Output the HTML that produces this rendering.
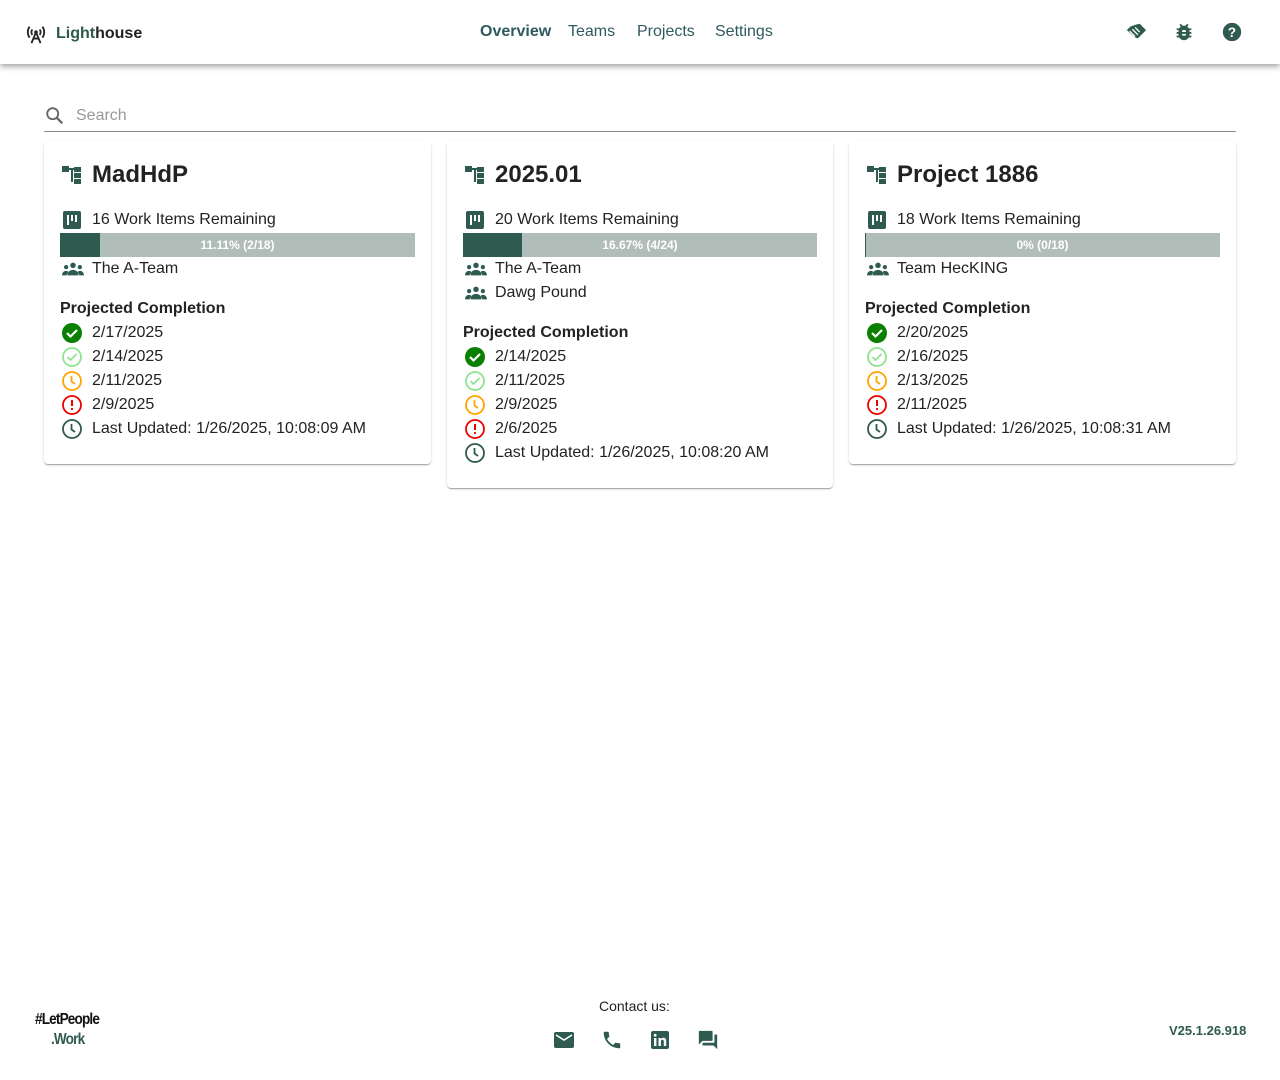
<!DOCTYPE html>
<html><head><meta charset="utf-8"><style>
*{box-sizing:border-box;margin:0;padding:0}
body{width:1280px;height:1080px;background:#fff;font-family:"Liberation Sans",Arial,sans-serif;color:#222;position:relative;overflow:hidden}
.hdr{position:absolute;left:0;top:0;width:1280px;height:64px;background:#fff;box-shadow:0 2px 4px -1px rgba(0,0,0,.2),0 4px 5px 0 rgba(0,0,0,.14),0 1px 10px 0 rgba(0,0,0,.12)}
.logo{position:absolute;left:25px;top:24px;font-size:16px;font-weight:bold;color:#222;display:flex;align-items:center;gap:9px}
.logo span.l{color:#2e5a50}
.nav{position:absolute;top:23px;left:480px;font-size:16px;color:#2e5a5f}
.nav span{position:absolute;white-space:nowrap}
.ticons svg{position:absolute;top:21px}
.search{position:absolute;left:44px;top:100px;width:1192px;height:32px;border-bottom:1px solid #8a8a8a}
.search span{position:absolute;left:32px;top:7px;font-size:16px;color:#999}
.card{position:absolute;top:141px;width:387px;background:#fff;border-radius:4px;box-shadow:0 2px 1px -1px rgba(0,0,0,.2),0 1px 1px 0 rgba(0,0,0,.14),0 1px 3px 0 rgba(0,0,0,.12);padding:18px 16px 23px}
.title{height:32px;display:flex;align-items:center;font-size:24px;font-weight:bold;color:#222;margin-bottom:17px}
.title svg{margin:0 10px 0 2px}
.row{height:24px;display:flex;align-items:center;font-size:16px;color:#222;white-space:nowrap}
.row svg{margin:0 10px 0 2px;flex:none}
.row svg.tm{margin-right:8px}
.bar{height:24px;background:#b0bdb9;position:relative;margin:1px 0 0}
.bar .f{position:absolute;left:0;top:0;bottom:0;background:#2e5a50}
.bar span{position:absolute;left:0;right:0;top:5px;text-align:center;font-size:12px;font-weight:bold;color:#fff}
.pc{font-weight:bold;margin-top:16px}
.foot{position:absolute;top:990px;width:1280px}
</style></head><body>
<div class="hdr">
 <div class="logo">
  <svg width="22" height="20" viewBox="0 0 24 22"><g fill="none" stroke="#222" stroke-width="2"><path d="M5 3a10 10 0 0 0 0 12M19 3a10 10 0 0 1 0 12M8 6a5 5 0 0 0 0 6M16 6a5 5 0 0 1 0 6"/></g><circle cx="12" cy="9" r="2" fill="#222"/><path d="M12 9l-5 12M12 9l5 12M9 16h6" stroke="#222" stroke-width="2" fill="none"/></svg>
  <div><span class="l">Light</span>house</div>
 </div>
 <div class="nav"><span style="left:0;font-weight:bold">Overview</span><span style="left:88px">Teams</span><span style="left:157px">Projects</span><span style="left:235px">Settings</span></div>
 <div class="ticons">
  <svg style="left:1125px" width="22" height="22" viewBox="0 0 24 24"><path fill="#2e5a50" d="M12 4l4-1 7 7-9 9-3-1L2 10l4-4z"/><path d="M5 11l6 6M8 9l6 6M11 7l5 5" stroke="#fff" stroke-width="1.4"/></svg>
  <svg style="left:1173px" width="22" height="22" viewBox="0 0 24 24"><path fill="#2e5a50" d="M20 8h-2.8c-.45-.78-1.07-1.450-1.82-1.96L17 4.41 15.590 3l-2.17 2.17a6 6 0 0 0-2.83 0L8.41 3 7 4.41l1.62 1.63C7.88 6.55 7.26 7.22 6.81 8H4v2h2.09c-.05.33-.09.66-.09 1v1H4v2h2v1c0 .34.04.67.09 1H4v2h2.81A6 6 0 0 0 17.2 18H20v-2h-2.09c.05-.33.09-.66.09-1v-1h2v-2h-2v-1c0-.34-.04-.67-.09-1H20zm-6 8h-4v-2h4zm0-4h-4v-2h4z"/></svg>
  <svg style="left:1221px" width="22" height="22" viewBox="0 0 24 24"><circle cx="12" cy="12" r="10" fill="#2e5a50"/><text x="12" y="17.5" text-anchor="middle" font-size="15" font-weight="bold" fill="#fff" font-family="Liberation Sans">?</text></svg>
 </div>
</div>
<div class="search">
 <svg style="position:absolute;left:0;top:5px" width="22" height="22" viewBox="0 0 24 24"><circle cx="9.5" cy="9.5" r="6" fill="none" stroke="#666" stroke-width="2"/><path d="M14 14l6 6" stroke="#666" stroke-width="2.4"/></svg>
 <span>Search</span>
</div>

<div class="card" style="left:44px">
 <div class="title"><svg width="20" height="20" viewBox="0 0 20 20" fill="#2e5a50"><rect x="0" y="1" width="7" height="6"/><rect x="7" y="3" width="6" height="2"/><rect x="9" y="3" width="2" height="14"/><rect x="12" y="2" width="7" height="5"/><rect x="12" y="8" width="7" height="5"/><rect x="12" y="14" width="7" height="5"/></svg>MadHdP</div>
 <div class="row"><svg width="20" height="20" viewBox="0 0 20 20"><rect x="1" y="1" width="18" height="18" rx="2" fill="#2e5a50"/><path d="M6 5v10M10 5v6M14 5v7" stroke="#fff" stroke-width="2"/></svg>16 Work Items Remaining</div>
 <div class="bar"><div class="f" style="width:40px"></div><span>11.11% (2/18)</span></div>
 <div class="row"><svg class="tm" width="22" height="16" viewBox="0 0 24 16" fill="#2e5a50"><circle cx="12" cy="4" r="3"/><circle cx="4.5" cy="6" r="2.3"/><circle cx="19.5" cy="6" r="2.3"/><path d="M6 15c0-4 3-6 6-6s6 2 6 6zM0 15c0-3 2-5 4-5s3 1 3 1l-2 4zM24 15c0-3-2-5-4-5s-3 1-3 1l2 4z"/></svg>The A-Team</div>
 <div class="row pc">Projected Completion</div>
 <div class="row"><svg width="20" height="20" viewBox="0 0 20 20"><circle cx="10" cy="10" r="10" fill="#0a8000"/><path d="M5 10l3.5 3.5L15 7" stroke="#fff" stroke-width="2.2" fill="none"/></svg>2/17/2025</div>
 <div class="row"><svg width="20" height="20" viewBox="0 0 20 20"><circle cx="10" cy="10" r="9" fill="none" stroke="#8fe38f" stroke-width="1.8"/><path d="M5.5 10l3 3L14.5 7" stroke="#8fe38f" stroke-width="1.8" fill="none"/></svg>2/14/2025</div>
 <div class="row"><svg width="20" height="20" viewBox="0 0 20 20"><circle cx="10" cy="10" r="9" fill="none" stroke="#ffa500" stroke-width="1.8"/><path d="M9.5 5v5.5l3.5 2.5" stroke="#ffa500" stroke-width="1.8" fill="none"/></svg>2/11/2025</div>
 <div class="row"><svg width="20" height="20" viewBox="0 0 20 20"><circle cx="10" cy="10" r="9" fill="none" stroke="#e00" stroke-width="1.8"/><path d="M10 5v6" stroke="#e00" stroke-width="2"/><circle cx="10" cy="14" r="1.1" fill="#e00"/></svg>2/9/2025</div>
 <div class="row"><svg width="20" height="20" viewBox="0 0 20 20"><circle cx="10" cy="10" r="9" fill="none" stroke="#2e5a50" stroke-width="1.8"/><path d="M9.5 5v5.5l3.5 2.5" stroke="#2e5a50" stroke-width="1.8" fill="none"/></svg>Last Updated: 1/26/2025, 10:08:09 AM</div>
</div>

<div class="card" style="left:447px;width:386px">
 <div class="title"><svg width="20" height="20" viewBox="0 0 20 20" fill="#2e5a50"><rect x="0" y="1" width="7" height="6"/><rect x="7" y="3" width="6" height="2"/><rect x="9" y="3" width="2" height="14"/><rect x="12" y="2" width="7" height="5"/><rect x="12" y="8" width="7" height="5"/><rect x="12" y="14" width="7" height="5"/></svg>2025.01</div>
 <div class="row"><svg width="20" height="20" viewBox="0 0 20 20"><rect x="1" y="1" width="18" height="18" rx="2" fill="#2e5a50"/><path d="M6 5v10M10 5v6M14 5v7" stroke="#fff" stroke-width="2"/></svg>20 Work Items Remaining</div>
 <div class="bar"><div class="f" style="width:59px"></div><span>16.67% (4/24)</span></div>
 <div class="row"><svg class="tm" width="22" height="16" viewBox="0 0 24 16" fill="#2e5a50"><circle cx="12" cy="4" r="3"/><circle cx="4.5" cy="6" r="2.3"/><circle cx="19.5" cy="6" r="2.3"/><path d="M6 15c0-4 3-6 6-6s6 2 6 6zM0 15c0-3 2-5 4-5s3 1 3 1l-2 4zM24 15c0-3-2-5-4-5s-3 1-3 1l2 4z"/></svg>The A-Team</div>
 <div class="row"><svg class="tm" width="22" height="16" viewBox="0 0 24 16" fill="#2e5a50"><circle cx="12" cy="4" r="3"/><circle cx="4.5" cy="6" r="2.3"/><circle cx="19.5" cy="6" r="2.3"/><path d="M6 15c0-4 3-6 6-6s6 2 6 6zM0 15c0-3 2-5 4-5s3 1 3 1l-2 4zM24 15c0-3-2-5-4-5s-3 1-3 1l2 4z"/></svg>Dawg Pound</div>
 <div class="row pc">Projected Completion</div>
 <div class="row"><svg width="20" height="20" viewBox="0 0 20 20"><circle cx="10" cy="10" r="10" fill="#0a8000"/><path d="M5 10l3.5 3.5L15 7" stroke="#fff" stroke-width="2.2" fill="none"/></svg>2/14/2025</div>
 <div class="row"><svg width="20" height="20" viewBox="0 0 20 20"><circle cx="10" cy="10" r="9" fill="none" stroke="#8fe38f" stroke-width="1.8"/><path d="M5.5 10l3 3L14.5 7" stroke="#8fe38f" stroke-width="1.8" fill="none"/></svg>2/11/2025</div>
 <div class="row"><svg width="20" height="20" viewBox="0 0 20 20"><circle cx="10" cy="10" r="9" fill="none" stroke="#ffa500" stroke-width="1.8"/><path d="M9.5 5v5.5l3.5 2.5" stroke="#ffa500" stroke-width="1.8" fill="none"/></svg>2/9/2025</div>
 <div class="row"><svg width="20" height="20" viewBox="0 0 20 20"><circle cx="10" cy="10" r="9" fill="none" stroke="#e00" stroke-width="1.8"/><path d="M10 5v6" stroke="#e00" stroke-width="2"/><circle cx="10" cy="14" r="1.1" fill="#e00"/></svg>2/6/2025</div>
 <div class="row"><svg width="20" height="20" viewBox="0 0 20 20"><circle cx="10" cy="10" r="9" fill="none" stroke="#2e5a50" stroke-width="1.8"/><path d="M9.5 5v5.5l3.5 2.5" stroke="#2e5a50" stroke-width="1.8" fill="none"/></svg>Last Updated: 1/26/2025, 10:08:20 AM</div>
</div>

<div class="card" style="left:849px">
 <div class="title"><svg width="20" height="20" viewBox="0 0 20 20" fill="#2e5a50"><rect x="0" y="1" width="7" height="6"/><rect x="7" y="3" width="6" height="2"/><rect x="9" y="3" width="2" height="14"/><rect x="12" y="2" width="7" height="5"/><rect x="12" y="8" width="7" height="5"/><rect x="12" y="14" width="7" height="5"/></svg>Project 1886</div>
 <div class="row"><svg width="20" height="20" viewBox="0 0 20 20"><rect x="1" y="1" width="18" height="18" rx="2" fill="#2e5a50"/><path d="M6 5v10M10 5v6M14 5v7" stroke="#fff" stroke-width="2"/></svg>18 Work Items Remaining</div>
 <div class="bar"><div class="f" style="width:1px"></div><span>0% (0/18)</span></div>
 <div class="row"><svg class="tm" width="22" height="16" viewBox="0 0 24 16" fill="#2e5a50"><circle cx="12" cy="4" r="3"/><circle cx="4.5" cy="6" r="2.3"/><circle cx="19.5" cy="6" r="2.3"/><path d="M6 15c0-4 3-6 6-6s6 2 6 6zM0 15c0-3 2-5 4-5s3 1 3 1l-2 4zM24 15c0-3-2-5-4-5s-3 1-3 1l2 4z"/></svg>Team HecKING</div>
 <div class="row pc">Projected Completion</div>
 <div class="row"><svg width="20" height="20" viewBox="0 0 20 20"><circle cx="10" cy="10" r="10" fill="#0a8000"/><path d="M5 10l3.5 3.5L15 7" stroke="#fff" stroke-width="2.2" fill="none"/></svg>2/20/2025</div>
 <div class="row"><svg width="20" height="20" viewBox="0 0 20 20"><circle cx="10" cy="10" r="9" fill="none" stroke="#8fe38f" stroke-width="1.8"/><path d="M5.5 10l3 3L14.5 7" stroke="#8fe38f" stroke-width="1.8" fill="none"/></svg>2/16/2025</div>
 <div class="row"><svg width="20" height="20" viewBox="0 0 20 20"><circle cx="10" cy="10" r="9" fill="none" stroke="#ffa500" stroke-width="1.8"/><path d="M9.5 5v5.5l3.5 2.5" stroke="#ffa500" stroke-width="1.8" fill="none"/></svg>2/13/2025</div>
 <div class="row"><svg width="20" height="20" viewBox="0 0 20 20"><circle cx="10" cy="10" r="9" fill="none" stroke="#e00" stroke-width="1.8"/><path d="M10 5v6" stroke="#e00" stroke-width="2"/><circle cx="10" cy="14" r="1.1" fill="#e00"/></svg>2/11/2025</div>
 <div class="row"><svg width="20" height="20" viewBox="0 0 20 20"><circle cx="10" cy="10" r="9" fill="none" stroke="#2e5a50" stroke-width="1.8"/><path d="M9.5 5v5.5l3.5 2.5" stroke="#2e5a50" stroke-width="1.8" fill="none"/></svg>Last Updated: 1/26/2025, 10:08:31 AM</div>
</div>

<div class="foot">
 <div style="position:absolute;left:35px;top:21px;font-size:16px;font-weight:bold;color:#111;letter-spacing:-1px;transform:scaleX(.85);transform-origin:left">#LetPeople</div>
 <div style="position:absolute;left:51px;top:41px;font-size:16px;font-weight:bold;color:#2e5a50;letter-spacing:-1px;transform:scaleX(.85);transform-origin:left">.Work</div>
 <div style="position:absolute;left:599px;top:8px;font-size:14px;color:#222">Contact us:</div>
 <svg style="position:absolute;left:553px;top:40px" width="22" height="20" viewBox="0 0 22 20"><rect x="1" y="2" width="20" height="16" rx="2" fill="#2e5a50"/><path d="M3 5l8 5 8-5" stroke="#fff" stroke-width="1.6" fill="none"/></svg>
 <svg style="position:absolute;left:601px;top:39px" width="22" height="22" viewBox="0 0 24 24"><path fill="#2e5a50" d="M6.6 10.8c1.4 2.8 3.8 5.1 6.6 6.6l2.2-2.2c.3-.3.7-.4 1-.2 1.1.4 2.3.6 3.6.6.6 0 1 .4 1 1V20c0 .6-.4 1-1 1C10.6 21 3 13.4 3 4c0-.6.4-1 1-1h3.5c.6 0 1 .4 1 1 0 1.3.2 2.5.6 3.6.1.3 0 .7-.2 1z"/></svg>
 <svg style="position:absolute;left:649px;top:40px" width="22" height="20" viewBox="0 0 22 20"><rect x="2" y="1" width="18" height="18" rx="2" fill="#2e5a50"/><rect x="5" y="8" width="2.4" height="8" fill="#fff"/><circle cx="6.2" cy="5.2" r="1.4" fill="#fff"/><path d="M9.5 8h2.3v1.2c.5-.9 1.5-1.4 2.6-1.4 2 0 2.8 1.2 2.8 3.3V16h-2.4v-4.5c0-1-.3-1.7-1.2-1.7s-1.7.6-1.7 1.8V16H9.5z" fill="#fff"/></svg>
 <svg style="position:absolute;left:697px;top:39px" width="22" height="22" viewBox="0 0 24 24"><path fill="#2e5a50" d="M21 6h-2v9H6v2c0 .55.45 1 1 1h11l4 4V7c0-.55-.45-1-1-1m-4 6V3c0-.55-.45-1-1-1H3c-.55 0-1 .45-1 1v14l4-4h10c.55 0 1-.45 1-1"/></svg>
 <div style="position:absolute;left:1169px;top:33px;font-size:13px;font-weight:bold;color:#2e5a50">V25.1.26.918</div>
</div>
</body></html>
